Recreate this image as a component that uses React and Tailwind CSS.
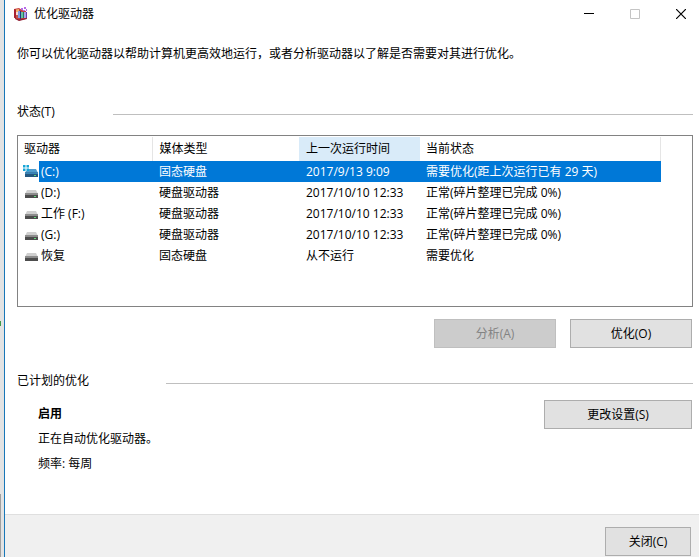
import React, { useState } from 'react';

const drives = [
  { name: '(C:)', media: '固态硬盘', lastRun: '2017/9/13 9:09', status: '需要优化(距上次运行已有 29 天)', system: true },
  { name: '(D:)', media: '硬盘驱动器', lastRun: '2017/10/10 12:33', status: '正常(碎片整理已完成 0%)' },
  { name: '工作 (F:)', media: '硬盘驱动器', lastRun: '2017/10/10 12:33', status: '正常(碎片整理已完成 0%)' },
  { name: '(G:)', media: '硬盘驱动器', lastRun: '2017/10/10 12:33', status: '正常(碎片整理已完成 0%)' },
  { name: '恢复', media: '固态硬盘', lastRun: '从不运行', status: '需要优化', dim: true },
];

const buttonClass = 'h-[29px] border border-[#adadad] bg-[#e1e1e1] text-center';
const controlClass = 'flex h-7 w-9 items-center justify-center';

function AppIcon() {
  return (
    <svg width="16" height="16" viewBox="0 0 16 16" aria-hidden="true">
      <path d="M1 3l5-1 3 2 4 1v8l-7 1.500-5-3z" fill="#c8403f" />
      <path d="M1 3l2 .7v9L1 11.500z" fill="#a82030" />
      <path d="M3 3.500l3-.5v3H3z" fill="#f0b06a" />
      <path d="M3 6h2v3H3z" fill="#f6d9d2" />
      <path d="M5 5h2v7H5z" fill="#7d9be0" />
      <path d="M7 5h1v8H7z" fill="#27357f" />
      <path d="M8 6h2v6H8z" fill="#66c1a4" />
      <path d="M10 6h1v6h-1z" fill="#2b7d5a" />
      <path d="M11 6h2v6h-2z" fill="#a9a2ec" />
      <path d="M13 6h1v6l-1 .5z" fill="#6a3fa8" />
      <path d="M3 9h2v3H3z" fill="#c0564c" />
      <path d="M2 12l4 1.500 8-1.500v1l-8 2-4-2z" fill="#8d1f35" />
      <path d="M8 2h2v2H8zM11 1h2v2h-2zM10 4h2v1h-2zM13 3h1v2h-1z" fill="#b66be6" />
    </svg>
  );
}

function DriveIcon({ system, dim }) {
  return (
    <svg width="16" height="16" viewBox="0 0 16 16" className="shrink-0" aria-hidden="true">
      <path d="M4 5h9l2 4H2z" fill={system ? '#4f9ccd' : '#cfcfcf'} />
      <path d="M2 8.500h13V13H2z" fill={system ? '#24577f' : '#4d4d4d'} />
      <path d="M2 8.500h13v1.500H2z" fill={system ? '#3a86b8' : '#8c8c8c'} />
      {!dim && <path d="M11 11h2v1h-2z" fill="#62db7b" />}
      {system && (
        <>
          <path d="M0 1h6v6H0z" fill="#ffffff" />
          <path d="M0 1h2.500v2.500H0zM3.500 1H6v2.500H3.500zM0 4.500h2.500V7H0zM3.500 4.500H6V7H3.500z" fill="#18a5d6" />
        </>
      )}
    </svg>
  );
}

function SectionTitle({ children, wide }) {
  return (
    <div className="flex h-5 items-center">
      <h2 className={wide ? 'w-[149px]' : 'w-24'}>{children}</h2>
      <div className="mt-1 h-px flex-1 bg-[#bfbfbf]" />
    </div>
  );
}

export default function App() {
  const [selected, setSelected] = useState(0);

  return (
    <div className="flex min-h-screen bg-white font-['Open_Sans','Noto_Sans_CJK_SC',sans-serif] text-[12px] leading-5 text-black">
      {/* Sliver of the desktop behind the window */}
      <div className="flex w-1 shrink-0 flex-col bg-[#e3e3e3]">
        <div className="h-[321px]" />
        <div className="h-[5px] w-px bg-[#3f9a4a]" />
        <div className="h-[168px]" />
        <div className="w-px flex-1 bg-[#a0a0a0]" />
      </div>

      <div className="flex min-w-0 flex-1 flex-col border-l border-[#1877b8]">
        <header className="flex h-7 items-center justify-between pl-2">
          <div className="flex items-center gap-[5px]">
            <AppIcon />
            <h1>优化驱动器</h1>
          </div>
          <div className="flex gap-[10px]">
            <button type="button" aria-label="最小化" className={controlClass}>
              <svg width="10" height="10" viewBox="0 0 10 10">
                <path d="M0 4.500h10" stroke="#000000" />
              </svg>
            </button>
            <button type="button" aria-label="最大化" disabled className={controlClass}>
              <svg width="10" height="10" viewBox="0 0 10 10">
                <path d="M.5.5h9v9h-9z" fill="none" stroke="#c4c4c4" />
              </svg>
            </button>
            <button type="button" aria-label="关闭" className={controlClass}>
              <svg width="10" height="10" viewBox="0 0 10 10">
                <path d="M0 0l10 10M10 0L0 10" stroke="#000000" strokeWidth="1.2" />
              </svg>
            </button>
          </div>
        </header>

        <main className="flex flex-col pl-3 pr-[6px]">
          <p className="mt-4">你可以优化驱动器以帮助计算机更高效地运行，或者分析驱动器以了解是否需要对其进行优化。</p>

          <div className="mt-[38px]">
            <SectionTitle>状态(T)</SectionTitle>
          </div>

          <div className="mt-[13px] min-h-[172px] border border-[#828282] pr-[31px] pt-px">
            <table className="w-full table-fixed border-collapse text-left">
              <colgroup>
                <col className="w-[134px]" />
                <col className="w-[147px]" />
                <col className="w-[121px]" />
                <col />
              </colgroup>
              <thead>
                <tr className="h-6">
                  <th className="border-r border-[#e5e5e5] p-0 pl-[6px] font-normal">驱动器</th>
                  <th className="p-0 pl-[7px] font-normal">媒体类型</th>
                  <th className="bg-[#d9ebf9] p-0 pl-[7px] font-normal">上一次运行时间</th>
                  <th className="border-r border-[#e5e5e5] p-0 pl-[6px] font-normal">当前状态</th>
                </tr>
              </thead>
              <tbody>
                {drives.map((d, i) => {
                  const cell = i === selected ? 'bg-[#0078d7] text-white' : '';
                  return (
                    <tr key={d.name} className="h-[21px]" onClick={() => setSelected(i)}>
                      <td className="p-0">
                        <div className="flex h-[21px] items-center pl-[5px]">
                          <DriveIcon system={d.system} dim={d.dim} />
                          <span className={'flex h-[21px] flex-1 items-end pl-[2px] ' + cell}>{d.name}</span>
                        </div>
                      </td>
                      <td className={'p-0 pl-[7px] ' + cell}>{d.media}</td>
                      <td className={'p-0 pl-[7px] ' + cell}>{d.lastRun}</td>
                      <td className={'p-0 pl-[6px] ' + cell}>{d.status}</td>
                    </tr>
                  );
                })}
              </tbody>
            </table>
          </div>

          <div className="mt-3 flex justify-end gap-[14px] pr-px">
            <button type="button" disabled className="h-[29px] w-[122px] border border-[#bfbfbf] bg-[#cccccc] text-center text-[#838383]">
              分析(A)
            </button>
            <button type="button" className={buttonClass + ' w-[122px]'}>
              优化(O)
            </button>
          </div>

          <div className="mt-[23px]">
            <SectionTitle wide>已计划的优化</SectionTitle>
          </div>

          <div className="mt-[9px] flex items-start justify-between pl-[21px] pr-px">
            <div className="pt-px leading-[25px]">
              <p className="font-bold">启用</p>
              <p>正在自动优化驱动器。</p>
              <p>频率: 每周</p>
            </div>
            <button type="button" className={buttonClass + ' w-[148px]'}>
              更改设置(S)
            </button>
          </div>
        </main>

        <footer className="mt-auto flex h-[43px] justify-end border-t border-[#dfdfdf] bg-[#f0f0f0] pr-2 pt-3">
          <button type="button" className={buttonClass + ' w-[86px]'}>
            关闭(C)
          </button>
        </footer>
      </div>
    </div>
  );
}
